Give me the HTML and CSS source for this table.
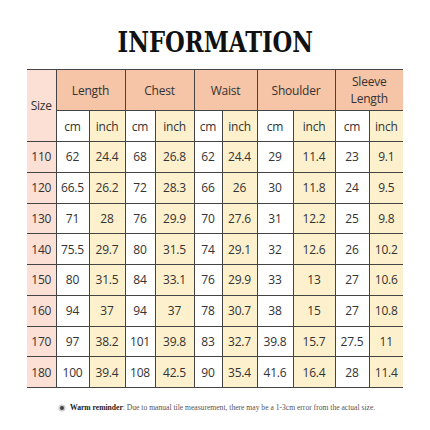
FILE: index.html
```html
<!DOCTYPE html>
<html>
<head>
<meta charset="utf-8">
<link rel="stylesheet" href="styles.css">
</head>
<body>
<div class="page">
  <h1 class="title"><span class="title-text">INFORMATION</span></h1>
  <table class="chart">
    <colgroup>
      <col class="c-size">
      <col class="c1"><col class="c2">
      <col class="c3"><col class="c4">
      <col class="c5"><col class="c6">
      <col class="c7"><col class="c8">
      <col class="c9"><col class="c10">
    </colgroup>
    <thead>
      <tr class="h1">
        <th rowspan="2" class="size">Size</th>
        <th colspan="2">Length</th>
        <th colspan="2">Chest</th>
        <th colspan="2">Waist</th>
        <th colspan="2">Shoulder</th>
        <th colspan="2" class="two">Sleeve<br>Length</th>
      </tr>
      <tr class="h2">
        <td>cm</td><td class="in">inch</td>
        <td>cm</td><td class="in">inch</td>
        <td>cm</td><td class="in">inch</td>
        <td>cm</td><td class="in">inch</td>
        <td>cm</td><td class="in">inch</td>
      </tr>
    </thead>
    <tbody>
      <tr><th class="size">110</th><td>62</td><td class="in">24.4</td><td>68</td><td class="in">26.8</td><td>62</td><td class="in">24.4</td><td>29</td><td class="in">11.4</td><td>23</td><td class="in">9.1</td></tr>
      <tr><th class="size">120</th><td>66.5</td><td class="in">26.2</td><td>72</td><td class="in">28.3</td><td>66</td><td class="in">26</td><td>30</td><td class="in">11.8</td><td>24</td><td class="in">9.5</td></tr>
      <tr><th class="size">130</th><td>71</td><td class="in">28</td><td>76</td><td class="in">29.9</td><td>70</td><td class="in">27.6</td><td>31</td><td class="in">12.2</td><td>25</td><td class="in">9.8</td></tr>
      <tr><th class="size">140</th><td>75.5</td><td class="in">29.7</td><td>80</td><td class="in">31.5</td><td>74</td><td class="in">29.1</td><td>32</td><td class="in">12.6</td><td>26</td><td class="in">10.2</td></tr>
      <tr><th class="size">150</th><td>80</td><td class="in">31.5</td><td>84</td><td class="in">33.1</td><td>76</td><td class="in">29.9</td><td>33</td><td class="in">13</td><td>27</td><td class="in">10.6</td></tr>
      <tr><th class="size">160</th><td>94</td><td class="in">37</td><td>94</td><td class="in">37</td><td>78</td><td class="in">30.7</td><td>38</td><td class="in">15</td><td>27</td><td class="in">10.8</td></tr>
      <tr><th class="size">170</th><td>97</td><td class="in">38.2</td><td>101</td><td class="in">39.8</td><td>83</td><td class="in">32.7</td><td>39.8</td><td class="in">15.7</td><td>27.5</td><td class="in">11</td></tr>
      <tr><th class="size">180</th><td>100</td><td class="in">39.4</td><td>108</td><td class="in">42.5</td><td>90</td><td class="in">35.4</td><td>41.6</td><td class="in">16.4</td><td>28</td><td class="in">11.4</td></tr>
    </tbody>
  </table>
  <p class="note"><span class="dot"></span><b>Warm reminder</b>: Due to manual tile measurement, there may be a 1-3cm error from the actual size.</p>
</div>
</body>
</html>
```
FILE: styles.css
```css
html, body {
  margin: 0;
  padding: 0;
  background: #ffffff;
}
.page {
  width: 430px;
  height: 430px;
  padding-top: 27px;
  box-sizing: border-box;
}
.title {
  margin: 0;
  height: 42px;
  text-align: center;
  font-family: "DejaVu Serif", serif;
  font-weight: bold;
  font-size: 27px;
  line-height: 32px;
  color: #111;
}
.title-text {
  display: inline-block;
  transform: scaleX(0.84);
}
.chart {
  margin-left: 27px;
  width: 376px;
  border-collapse: collapse;
  table-layout: fixed;
  font-family: "Open Sans", sans-serif;
  font-size: 12px;
  color: #333;
}
.c-size { width: 29px; }
.c1 { width: 33px; }
.c2 { width: 36px; }
.c3 { width: 30px; }
.c4 { width: 39px; }
.c5 { width: 28px; }
.c6 { width: 35px; }
.c7 { width: 36px; }
.c8 { width: 42px; }
.c9 { width: 34px; }
.c10 { width: 34px; }
.chart th, .chart td {
  border: 1px solid #444;
  padding: 0;
  text-align: center;
  font-weight: normal;
  background: #ffffff;
  letter-spacing: -0.2px;
}
.chart tr > :first-child { border-left: none; }
.chart tr > :last-child { border-right: none; }
.chart thead tr.h1 th { background: #f6c4a7; height: 40px; }
.chart thead tr.h1 th.size { background: #fce0d5; }
.chart th.two { line-height: 17px; }
.chart tr.h2 td { height: 30px; }
.chart td.in { background: #fdf0cd; }
.chart tbody th.size { background: #fce0d5; }
.chart tbody td, .chart tbody th { height: 29.75px; }
.note {
  margin: 15px 0 0 58px;
  font-family: "Liberation Serif", serif;
  font-size: 7.6px;
  color: #555;
  display: flex;
  align-items: center;
}
.note b { color: #222; }
.dot {
  display: inline-block;
  width: 4px;
  height: 4px;
  border-radius: 50%;
  background: #444;
  box-shadow: 0 0 0 1.5px #ccc;
  margin-left: 2px;
  margin-right: 6px;
}
```
